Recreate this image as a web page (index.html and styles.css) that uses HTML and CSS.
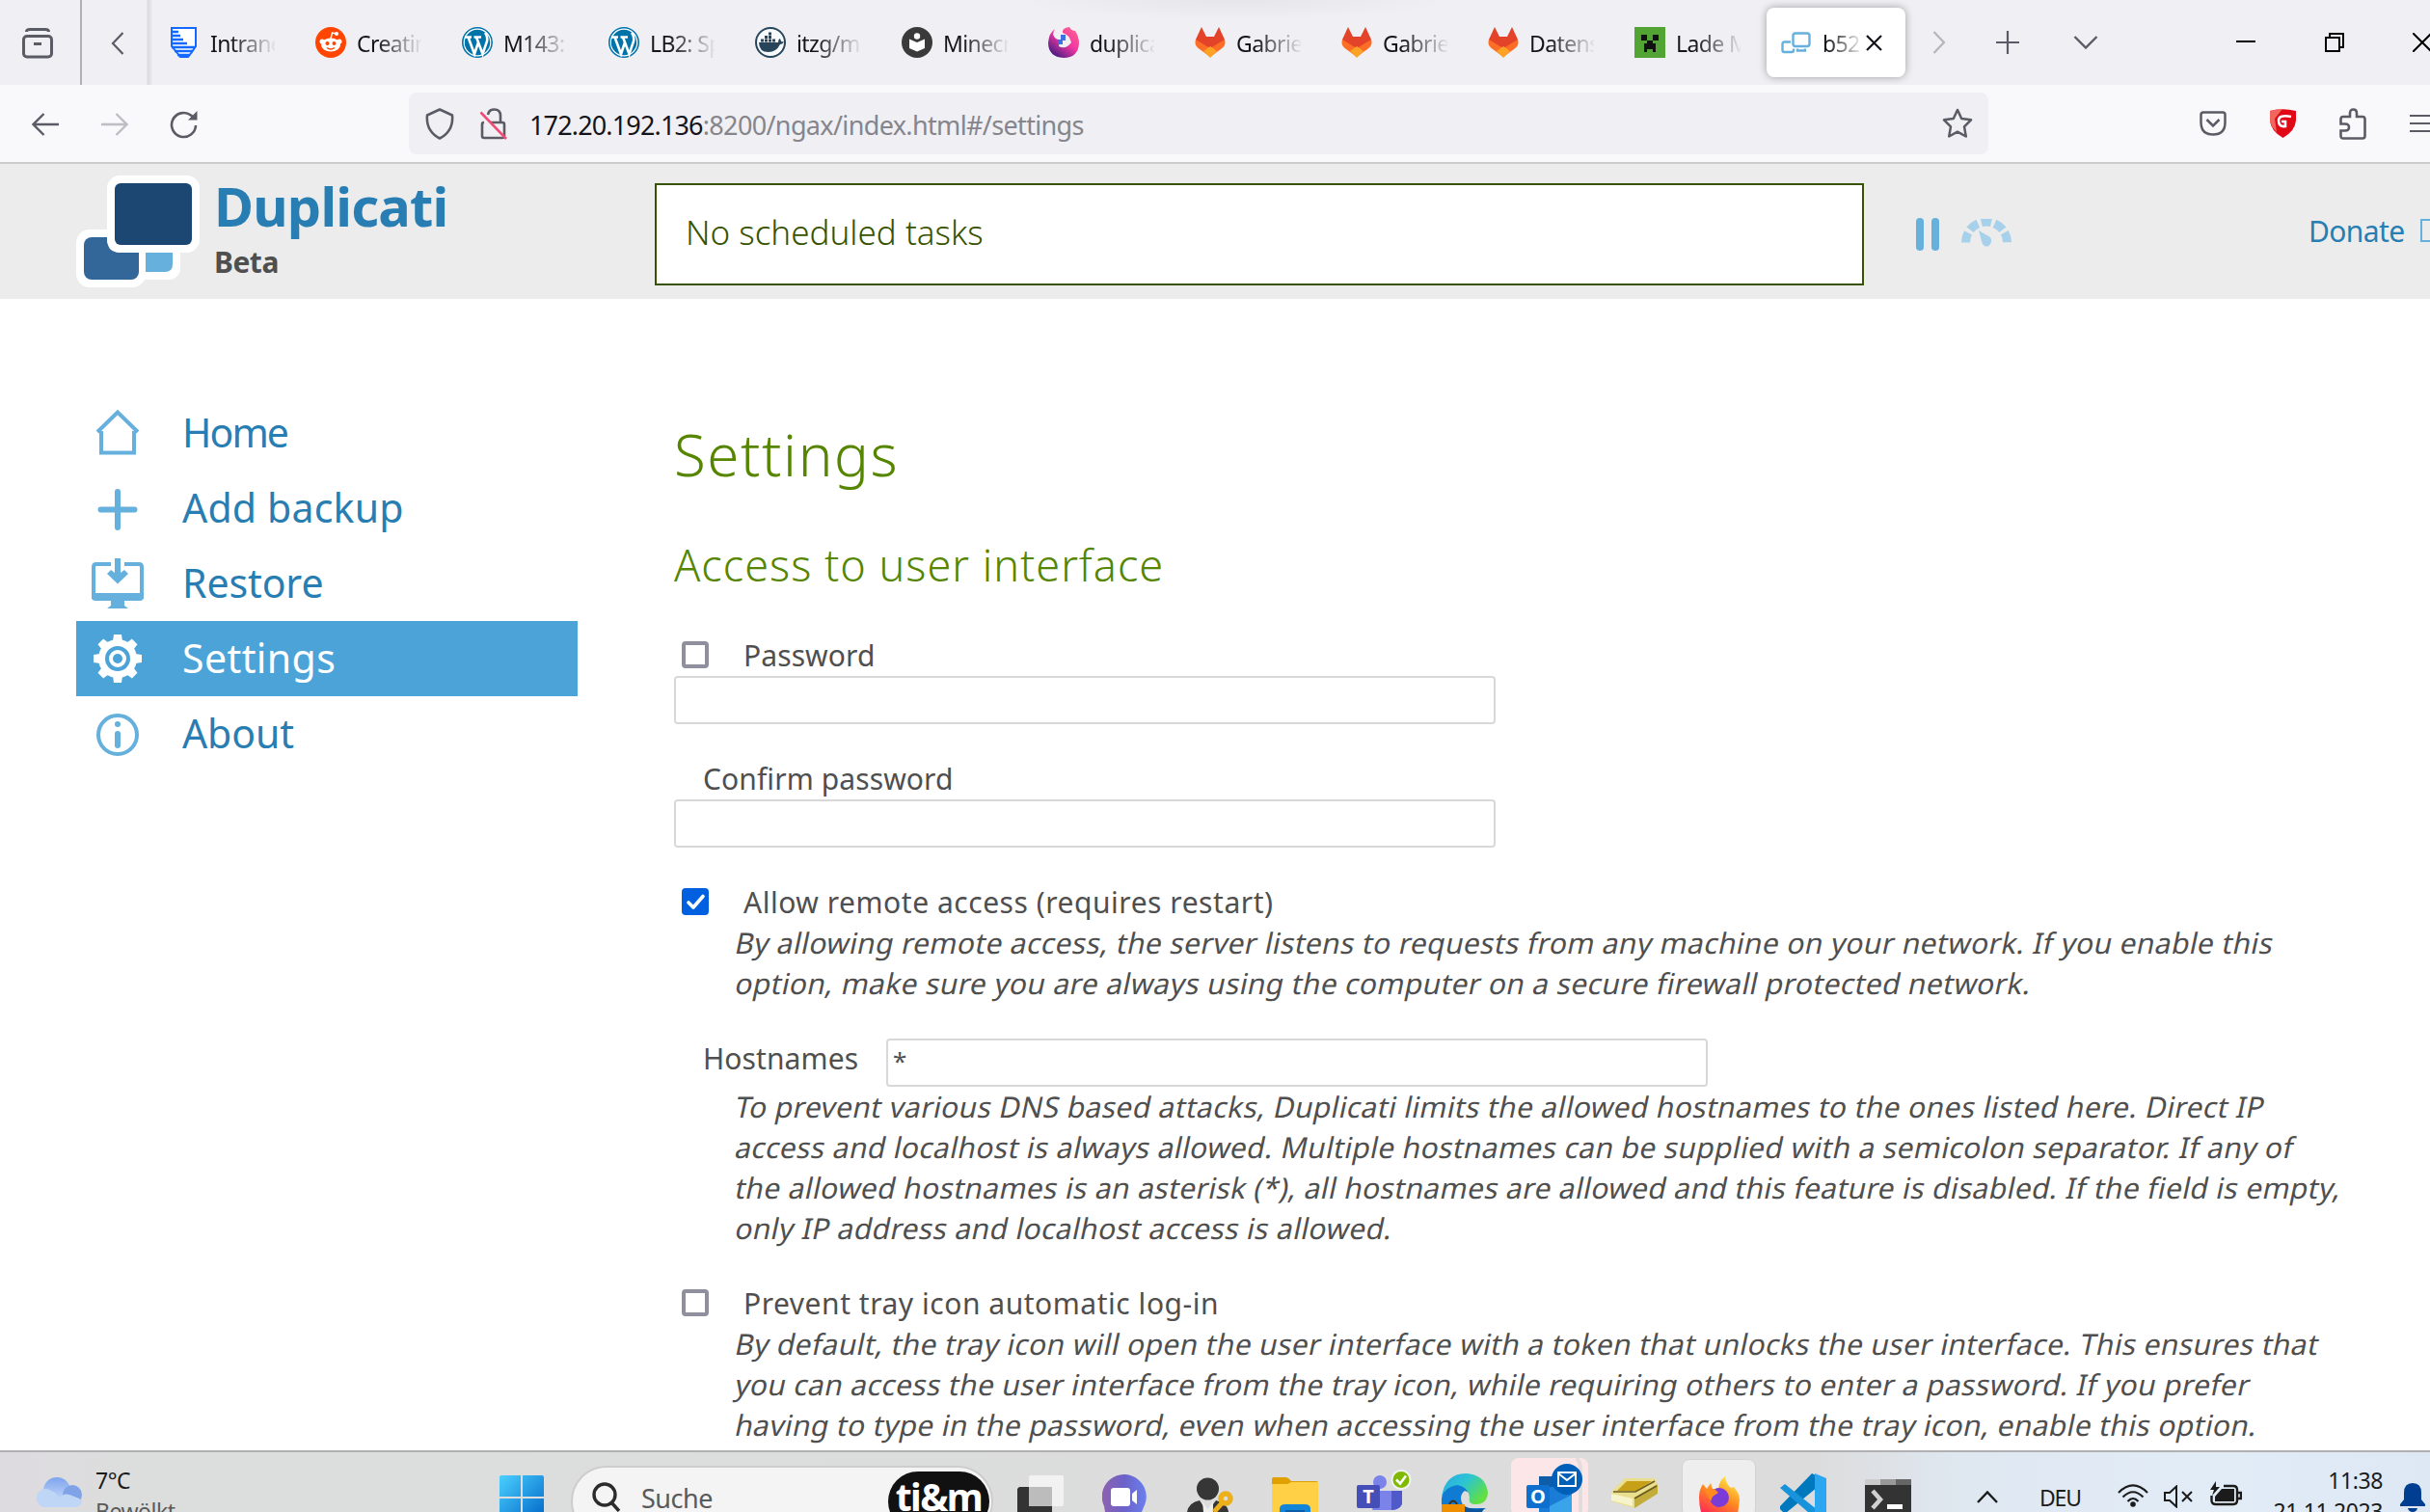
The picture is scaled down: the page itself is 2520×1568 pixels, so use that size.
FILE: index.html
```html
<!DOCTYPE html>
<html lang="de">
<head>
<meta charset="utf-8">
<title>Duplicati</title>
<link rel="stylesheet" href="styles.css">
</head>
<body>
<svg class="defs" width="0" height="0">
  <defs>
    <symbol id="fox" viewBox="0 0 32 32">
      <path fill="#e24329" d="M7 0 12 10H20L25 0 31 13 31 18 16 31 1 18 1 13Z"/>
      <path fill="#fc6d26" d="M1 13Q-1 19 5 23L16 31 27 23Q33 19 31 13L16 22Z"/>
      <path fill="#fca326" d="M9 25 16 20 23 25 16 32Z"/>
    </symbol>
    <symbol id="wp" viewBox="0 0 32 32">
      <circle cx="16" cy="16" r="15.2" fill="#fff" stroke="#0073aa" stroke-width="1.6"/>
      <circle cx="16" cy="16" r="13.2" fill="#0073aa"/>
      <path d="M3 10.5H10M12.500 10.5H20M6.500 10.5 13 28 17 16M15 10.5 21.500 28 26 15Q27 10 24 6" fill="none" stroke="#fff" stroke-width="2.6"/>
    </symbol>
  </defs>
</svg>

<header class="tabbar">
  <div class="archive">
    <svg width="32" height="32" viewBox="0 0 32 32" fill="none" stroke="#5b5b66" stroke-width="3"><path d="M4.500 4Q4.500 1.500 8 1.500H24Q27.500 1.500 27.500 4"/><rect x="1.500" y="8.500" width="29" height="21.500" rx="3.500"/><path d="M12 16.500H20"/></svg>
  </div>
  <div class="scroll-left">
    <svg width="14" height="24" viewBox="0 0 14 24" fill="none" stroke="#5b5b66" stroke-width="2.200"><path d="M12.500 1 2 12 12.500 23"/></svg>
  </div>
  <nav class="tabs">
    <div class="tab"><svg width="32" height="32" viewBox="0 0 32 32"><path d="M3 1H28V20L24 26 20 31H12L8 26 3 20Z" fill="#fff" stroke="#1369ff" stroke-width="2"/><path d="M3 5H10M3 9H12M3 13H15M3 17H19M3 21H27M6 25H25M9 29H22" stroke="#1369ff" stroke-width="2.400"/></svg><span>Intranet</span></div>
    <div class="tab"><svg width="32" height="32" viewBox="0 0 32 32"><circle cx="16" cy="16" r="16" fill="#ff4500"/><g fill="#fff"><ellipse cx="16" cy="18.500" rx="10" ry="7"/><circle cx="7" cy="15" r="2.500"/><circle cx="25" cy="15" r="2.500"/><circle cx="22" cy="7" r="2"/></g><path d="M16 12 17.500 6 22 7" stroke="#fff" stroke-width="1.400" fill="none"/><circle cx="12.500" cy="17" r="2" fill="#ff4500"/><circle cx="19.500" cy="17" r="2" fill="#ff4500"/><path d="M12 21.500Q16 24.500 20 21.500" stroke="#ff4500" stroke-width="1.400" fill="none"/></svg><span>Creating</span></div>
    <div class="tab"><svg width="32" height="32"><use href="#wp"/></svg><span>M143: L</span></div>
    <div class="tab"><svg width="32" height="32"><use href="#wp"/></svg><span>LB2: Sp</span></div>
    <div class="tab"><svg width="32" height="32" viewBox="0 0 32 32"><circle cx="16" cy="16" r="15" fill="#f7fafc" stroke="#27445a" stroke-width="2"/><path fill="#27445a" d="M4 16H24Q24 13 25.500 12 27 13 27 15L30 15.500Q28 18 26 18 22 26 14 26 4 26 4 16ZM6 12.500H9V15.500H6ZM10 12.500H13V15.500H10ZM14 12.500H17V15.500H14ZM18 12.500H21V15.500H18ZM10 9H13V12H10ZM14 9H17V12H14ZM14 5.500H17V8.500H14Z"/></svg><span>itzg/mi</span></div>
    <div class="tab"><svg width="32" height="32" viewBox="0 0 32 32"><circle cx="16" cy="16" r="16" fill="#3a3a3a"/><circle cx="16" cy="9.500" r="3.200" fill="#fff"/><path fill="#fff" d="M8 12.500 16 16 24 12.500V22L16 25.500 8 22Z"/></svg><span>Minecra</span></div>
    <div class="tab"><svg width="32" height="32" viewBox="0 0 32 32"><defs><linearGradient id="md" x1="1" y1="0" x2=".2" y2="1"><stop offset="0" stop-color="#ff6a8b"/><stop offset=".5" stop-color="#f437a2"/><stop offset="1" stop-color="#3b1a80"/></linearGradient></defs><path fill="url(#md)" d="M7 2Q3 8 8 12L12 14 11 20Q18 24 24 16 22 8 15 6 14 1 22 0 24 4 28 4 32 10 32 17 31 32 16 32 0 31 0 16 1 6 7 2Z"/><path fill="#3f6fe0" d="M13 8H18V14H15V18H10V13H13Z"/></svg><span>duplicati</span></div>
    <div class="tab"><svg width="32" height="32"><use href="#fox"/></svg><span>Gabriel</span></div>
    <div class="tab"><svg width="32" height="32"><use href="#fox"/></svg><span>Gabriel</span></div>
    <div class="tab"><svg width="32" height="32"><use href="#fox"/></svg><span>Datensi</span></div>
    <div class="tab"><svg width="32" height="32" viewBox="0 0 32 32"><path fill="#52a535" d="M0 0H32V32H0Z"/><path fill="#111" d="M7 8H13V14H7ZM19 8H25V14H19ZM13 14H19V17H22V26H19V23H13V26H10V17H13Z"/></svg><span>Lade Mi</span></div>
    <div class="tab active"><svg width="32" height="32" viewBox="0 0 32 32" fill="none" stroke="#65b0dd" stroke-width="2.400"><rect x="12.500" y="6.500" width="17" height="13.500" rx="2.500"/><path d="M10 15.500H3.500Q1.500 15.500 1.500 17.500V24Q1.500 26 3.500 26H11Q13 26 13 24V22.500"/><path d="M17 22.500V24.500H25V22.500" /></svg><span>b52</span><svg class="close" width="17" height="17" viewBox="0 0 17 17" stroke="#15141a" stroke-width="2.200"><path d="M1 1 16 16M16 1 1 16"/></svg></div>
  </nav>
  <div class="tabtools">
    <svg class="t-right" width="14" height="24" viewBox="0 0 14 24" fill="none" stroke="#b4b4bb" stroke-width="2.200"><path d="M1.500 1 12 12 1.500 23"/></svg>
    <svg class="t-plus" width="24" height="24" viewBox="0 0 24 24" stroke="#5b5b66" stroke-width="2.200"><path d="M0 12H24M12 0V24"/></svg>
    <svg class="t-down" width="26" height="14" viewBox="0 0 26 14" fill="none" stroke="#5b5b66" stroke-width="2.400"><path d="M1.500 1 13 12.500 24.500 1"/></svg>
    <svg class="t-min" width="20" height="20" viewBox="0 0 20 20" stroke="#000" stroke-width="2"><path d="M0 9H20"/></svg>
    <svg class="t-restore" width="20" height="20" viewBox="0 0 20 20" fill="none" stroke="#000" stroke-width="2"><path d="M1 5H15V19H1ZM5 4V1H19V15H16"/></svg>
    <svg class="t-close" width="20" height="20" viewBox="0 0 20 20" stroke="#000" stroke-width="2"><path d="M0 0 20 20M20 0 0 20"/></svg>
  </div>
</header>

<div class="toolbar">
  <svg class="n-back" width="28" height="24" viewBox="0 0 28 24" fill="none" stroke="#5b5b66" stroke-width="2.400"><path d="M28 12H2M12.500 1 1.500 12 12.500 23"/></svg>
  <svg class="n-fwd" width="28" height="24" viewBox="0 0 28 24" fill="none" stroke="#bdbdc3" stroke-width="2.400"><path d="M0 12H26M15.500 1 26.500 12 15.500 23"/></svg>
  <svg class="n-reload" width="30" height="30" viewBox="0 0 30 30" fill="none" stroke="#5b5b66" stroke-width="2.600"><path d="M27 16A12.500 12.500 0 1 1 22 5.500L26 9"/><path d="M28.500 1V10.500H19Z" fill="#5b5b66" stroke="none"/></svg>
  <div class="urlbar">
    <svg width="30" height="33" viewBox="0 0 30 33" fill="none" stroke="#5b5b66" stroke-width="2.600" stroke-linejoin="round"><path d="M15 1.500 28 7.500Q29.500 24 15 31.500 .5 24 2 7.500Z"/></svg>
    <svg class="lock" width="30" height="33" viewBox="0 0 30 33" fill="none" stroke="#5b5b66" stroke-width="2.600"><path d="M9 7Q10 1.500 15.500 1.500 22 1.500 22 8V14M12 15H24Q26 15 26 17V29Q26 31 24 31H5Q3 31 3 29V17Q3 15 5 15"/><path d="M1.500 4.500 28 32" stroke="#f24a76"/></svg>
    <span class="url"><b>172.20.192.136</b>:8200/ngax/index.html#/settings</span>
    <svg class="star" width="32" height="32" viewBox="0 0 32 32" fill="none" stroke="#5b5b66" stroke-width="2.500" stroke-linejoin="round"><path d="M16 2 20.200 11 30 12.300 23 19.400 24.800 29.500 16 24.700 7.200 29.500 9 19.400 2 12.300 11.800 11Z"/></svg>
  </div>
  <svg class="x-pocket" width="28" height="26" viewBox="0 0 28 26" fill="none" stroke="#5b5b66" stroke-width="2.500"><path d="M4 1.500H24Q26.500 1.500 26.500 4V12Q26.500 24.500 14 24.500 1.500 24.500 1.500 12V4Q1.500 1.500 4 1.500Z"/><path d="M7.500 9 14 15.500 20.500 9"/></svg>
  <svg class="x-g" width="27" height="30" viewBox="0 0 27 30"><path fill="#e10915" d="M0 2Q13-1.500 27 2V12Q26 23 13.500 30 1 23 0 12Z"/><path fill="#f2665f" d="M0 2Q6 0 13 0L5 10 7 24Q1 18 0 12Z"/><path d="M22 8Q9 5.500 9 12 9 19 16 18V13H12" fill="none" stroke="#fff" stroke-width="2.600"/></svg>
  <svg class="x-puzzle" width="28" height="33" viewBox="0 0 28 33" fill="none" stroke="#5b5b66" stroke-width="2.600"><path d="M11 9V5.500Q11 1.500 14.500 1.500 18 1.500 18 5.500V9H24Q26.500 9 26.500 11.500V29Q26.500 31.500 24 31.500H4Q1.500 31.500 1.500 29V23.500H6Q10 23.500 10 20 10 16.500 6 16.500H1.500V11.500Q1.500 9 4 9Z"/></svg>
  <svg class="x-menu" width="28" height="20" viewBox="0 0 28 20" stroke="#5b5b66" stroke-width="2.200"><path d="M0 2H28M0 10H28M0 18H28"/></svg>
</div>

<section class="apphead">
  <svg class="logo" width="128" height="118" viewBox="0 0 128 118"><g fill="#fff"><rect x="32" y="0" width="96" height="80" rx="14"/><rect x="0" y="56" width="72" height="60" rx="14"/><rect x="50" y="60" width="58" height="48" rx="12"/></g><path fill="#65b0dd" d="M72 80H100V92Q100 100 92 100H72Z"/><rect x="8" y="64" width="57" height="44" rx="8" fill="#336699"/><path d="M32 50V66Q32 80 46 80H66" fill="#fff"/><rect x="32" y="0" width="96" height="80" rx="14" fill="#fff"/><rect x="40" y="8" width="80" height="64" rx="6" fill="#1d4773"/></svg>
  <div class="brand"><h1>Duplicati</h1><strong>Beta</strong></div>
  <div class="status">No scheduled tasks</div>
  <svg class="pause" width="24" height="34" viewBox="0 0 24 34" fill="#65b0dd"><rect width="8" height="34" rx="4"/><rect x="16" width="8" height="34" rx="4"/></svg>
  <svg class="gauge" width="52" height="29" viewBox="0 0 52 29"><path d="M4.500 24.500A21.500 21.500 0 0 1 47.500 24.500" fill="none" stroke="#a7d1ea" stroke-width="9" stroke-dasharray="10.500 3.600" /><path fill="#a7d1ea" d="M18 12 30 19Q33 24 28.500 28 24 30 21.500 25Z"/></svg>
  <a class="donate">Donate</a><i class="badge"></i>
</section>

<main class="page">
  <ul class="menu">
    <li class="m-home"><svg width="54" height="54" viewBox="0 0 54 54" fill="none" stroke="#65b0dd" stroke-width="4"><path d="M10 25V47.500H44V25M6 26 27 5.500 48 26"/></svg><span>Home</span></li>
    <li class="m-add"><svg width="54" height="54" viewBox="0 0 54 54" stroke="#65b0dd" stroke-width="6" stroke-linecap="round"><path d="M27 10V47M9.500 28.500H44.500"/></svg><span>Add backup</span></li>
    <li class="m-restore"><svg width="54" height="54" viewBox="0 -1 54 54"><path d="M20 6H5Q2 6 2 9V40H52V9Q52 6 49 6H34" fill="none" stroke="#65b0dd" stroke-width="4"/><path fill="#65b0dd" d="M0 36H54V40Q54 44 50 44H34V49L38 52H16L20 49V44H4Q0 44 0 40ZM24 0H30V15L34 12 38 16 27 26.500 16 16 20 12 24 15Z"/></svg><span>Restore</span></li>
    <li class="current"><svg width="54" height="54" viewBox="0 0 54 54"><g fill="#fff"><circle cx="27" cy="27" r="20"/><path id="tooth" d="M22 9 23 2H31L32 9V45L31 52H23L22 45Z"/><use href="#tooth" transform="rotate(45 27 27)"/><use href="#tooth" transform="rotate(90 27 27)"/><use href="#tooth" transform="rotate(135 27 27)"/></g><circle cx="27" cy="27" r="11" fill="none" stroke="#4ca3d8" stroke-width="4"/><circle cx="27" cy="27" r="5" fill="#4ca3d8"/></svg><span>Settings</span></li>
    <li class="m-about"><svg width="54" height="54" viewBox="0 -1 54 54"><circle cx="27" cy="27" r="20" fill="none" stroke="#65b0dd" stroke-width="4"/><circle cx="27" cy="16" r="3" fill="#65b0dd"/><path d="M27 26V38" stroke="#65b0dd" stroke-width="6" stroke-linecap="round"/></svg><span>About</span></li>
  </ul>
  <div class="content">
    <h2>Settings</h2>
    <h3>Access to user interface</h3>
    <div class="row"><i class="check"></i><label>Password</label></div>
    <div class="field"></div>
    <div class="row plain gap"><label>Confirm password</label></div>
    <div class="field"></div>
    <div class="row gap"><i class="check on"><svg width="28" height="28" viewBox="0 0 28 28" fill="none" stroke="#fff" stroke-width="3.600" stroke-linecap="round" stroke-linejoin="round"><path d="M7 15 12 20 22 8.500"/></svg></i><label class="wide">Allow remote access (requires restart)</label></div>
    <p class="help"><span>By allowing remote access, the server listens to requests from any machine on your network. If you enable this</span><span>option, make sure you are always using the computer on a secure firewall protected network.</span></p>
    <div class="row plain hosts"><label>Hostnames</label><div class="field">*</div></div>
    <p class="help"><span>To prevent various DNS based attacks, Duplicati limits the allowed hostnames to the ones listed here. Direct IP</span><span>access and localhost is always allowed. Multiple hostnames can be supplied with a semicolon separator. If any of</span><span>the allowed hostnames is an asterisk (*), all hostnames are allowed and this feature is disabled. If the field is empty,</span><span>only IP address and localhost access is allowed.</span></p>
    <div class="row last"><i class="check"></i><label class="wide">Prevent tray icon automatic log-in</label></div>
    <p class="help"><span>By default, the tray icon will open the user interface with a token that unlocks the user interface. This ensures that</span><span>you can access the user interface from the tray icon, while requiring others to enter a password. If you prefer</span><span>having to type in the password, even when accessing the user interface from the tray icon, enable this option.</span></p>
  </div>
</main>

<footer class="taskbar">
  <svg class="k-cloud" width="48" height="31" viewBox="0 0 48 31"><defs><linearGradient id="cl" x1="0" y1="0" x2="0" y2="1"><stop offset="0" stop-color="#7ea4ee"/><stop offset="1" stop-color="#cfe0fa"/></linearGradient></defs><circle cx="22" cy="14" r="14" fill="url(#cl)"/><circle cx="38" cy="18" r="10" fill="#7fa3e6"/><path fill="#c0d6f7" d="M9 31A9.500 9.500 0 1 1 16 14Q22 16 24 22 30 14 40 20 48 22 48 26 46 31 40 31Z"/></svg>
  <div class="weather"><span>7°C</span><small>Bewölkt</small></div>
  <svg class="k-win" width="46" height="48" viewBox="0 0 46 48"><defs><linearGradient id="wn" x1="0" y1="0" x2="1" y2="1"><stop offset="0" stop-color="#4bd0ff"/><stop offset="1" stop-color="#0067c8"/></linearGradient></defs><path fill="url(#wn)" d="M2 0H22V22H0V2Q0 0 2 0ZM24 0H44Q46 0 46 2V22H24ZM0 24H22V46H0ZM24 24H46V46H24Z"/></svg>
  <div class="search"><svg width="30" height="32" viewBox="0 0 30 32" fill="none" stroke="#2b2b2b" stroke-width="3.400"><circle cx="13" cy="13" r="11"/><path d="M20 21 28 30"/></svg><span>Suche</span><b class="tim">ti&amp;m</b></div>
  <svg class="k-view" width="48" height="38" viewBox="0 0 48 38"><path fill="#333" d="M2 12H36V38H0V14Z"/><rect x="12" width="36" height="32" rx="2" fill="#f2f2f2"/><path fill="#bcbcbc" d="M12 12H36V32H12Z"/></svg>
  <svg class="k-chat" width="46" height="39" viewBox="0 0 46 39"><defs><linearGradient id="ch" x1="0" y1="0" x2="1" y2="0"><stop offset="0" stop-color="#8f61b0"/><stop offset=".5" stop-color="#6b62c9"/><stop offset="1" stop-color="#6b80ee"/></linearGradient></defs><path fill="url(#ch)" d="M3 39 2 33A23 23 0 1 1 43 34L41 39Z"/><rect x="9" y="14" width="20" height="19" rx="3" fill="#fff"/><path fill="#fff" d="M31 20 36 16V31L31 27Z"/></svg>
  <svg class="k-key" width="50" height="36" viewBox="0 0 50 36"><circle cx="21.500" cy="12" r="11.500" fill="#363636"/><path fill="#363636" d="M0 36Q2 26 13 24L21 36 30 24Q42 27 43 36Z"/><path d="M16 25 21.500 33 27 25V36H17Z" fill="#eee"/><path d="M28 36 36 27" stroke="#ebb01b" stroke-width="5"/><circle cx="40" cy="22" r="5" fill="#ddd" stroke="#ebb01b" stroke-width="5.500"/></svg>
  <svg class="k-folder" width="48" height="36" viewBox="0 0 48 36"><path fill="#e0a000" d="M0 2Q0 0 2 0H14Q17 0 20 4H46Q48 4 48 6V12H0Z"/><path fill="#ffcf45" d="M0 7H16L20 5H48V36H0Z"/><path fill="#1186d8" d="M8 36V33Q8 28 14 28H34Q40 28 40 33V36Z"/><path fill="#0b5cab" d="M14 34H34V36H14Z"/></svg>
  <svg class="k-teams" width="58" height="42" viewBox="0 0 58 42"><circle cx="24" cy="13" r="7" fill="#7b83eb"/><path fill="#7b83eb" d="M22 22H38V42H16Z"/><path fill="#5059c9" d="M36 22H47V36Q44 42 36 42Z"/><rect y="16" width="24" height="24" rx="2" fill="#454fb8"/><circle cx="46" cy="10.500" r="9.500" fill="#7fba00" stroke="#f2f2f2" stroke-width="2"/><path d="M41 10.500 45 14.500 51 6.500" stroke="#fff" stroke-width="2.600" fill="none"/><text x="12" y="35" text-anchor="middle" class="glyph">T</text></svg>
  <svg class="k-edge" width="48" height="40" viewBox="0 0 48 40"><defs><linearGradient id="eg" x1="0" y1="0" x2="1" y2=".6"><stop offset="0" stop-color="#2aa8e8"/><stop offset=".5" stop-color="#2cc5d2"/><stop offset="1" stop-color="#62e03f"/></linearGradient></defs><path fill="#0f7bd2" d="M0 26Q2 10 18 10 34 10 33 22L24 18Q16 24 24 36L46 36 40 40H0Z"/><path fill="url(#eg)" d="M0 24Q4 0 25 0 46 1 48 20 47 32 36 32 27 32 29 25 28 14 16 12 4 14 0 24Z"/><path fill="#0d559b" d="M24 34Q33 39 44 36L42 40H24Z"/><path d="M8 32Q12 25 16 32" stroke="#3b3020" stroke-width="2" fill="none"/><path fill="#f08f00" d="M0 32H24V40H0Z"/></svg>
  <div class="tile pink"><svg width="80" height="56" viewBox="0 0 80 56"><path d="M68 0Q72 4 72 12V56" stroke="#e2dcdd" stroke-width="4" fill="none"/><path fill="#0f5ca8" d="M29 19H55V32H29Z"/><path fill="#1a7cd6" d="M29 30H63V56H29Z"/><path fill="#3aa4ea" d="M40 50 63 38V56H40Z"/><rect x="16" y="28" width="24" height="24" rx="2" fill="#0f6fce"/><circle cx="58" cy="22" r="16" fill="#005fb8"/><path d="M49 15H67V29H49ZM49 16 58 23 67 16" fill="none" stroke="#fff" stroke-width="2"/><text x="28" y="47" text-anchor="middle" class="glyph">O</text></svg></div>
  <svg class="k-disk" width="48" height="32" viewBox="0 0 48 32"><path fill="#e9df8e" d="M0 14 14 0H46L48 14 24 31 0 24Z"/><path fill="#c3ad3a" d="M24 20 48 6V16L24 31Z"/><path fill="#f7f3cc" d="M0 16 22 21V29L0 23Z"/><path fill="#c8a018" d="M16 3H42L26 13H6Z"/><path d="M2 14H25L45 3M24 21 47 8" fill="none" stroke="#6b5c22" stroke-width="1.600"/></svg>
  <div class="tile lit"><svg width="42" height="40" viewBox="0 0 42 40"><defs><linearGradient id="fx" x1=".8" y1="0" x2=".2" y2="1"><stop offset="0" stop-color="#fff14a"/><stop offset=".5" stop-color="#ff8a1f"/><stop offset="1" stop-color="#ff2a55"/></linearGradient></defs><path fill="url(#fx)" d="M4 8 8 13 12 7 14 13 20 13Q21 4 27 0 28 8 33 12L36 11Q42 18 42 24L40 40H3Q0 32 0 22 0 14 4 8Z"/><circle cx="21" cy="22" r="10" fill="#7b3bd8"/><path fill="#ff8a1f" d="M6 14 16 13 20 17 14 21 12 26Z"/></svg></div>
  <svg class="k-code" width="48" height="41" viewBox="0 0 48 41"><path fill="#0078be" d="M0 34 33 0 39 3V14L6 41H4L0 37Z"/><path fill="#1793dc" d="M0 15 5 11 39 38V41H30Z"/><path fill="#2ba7f2" d="M36 0 48 5V41H36Z"/></svg>
  <svg class="k-term" width="48" height="34" viewBox="0 0 48 34"><path fill="#333" d="M0 0H48V34H0Z"/><path fill="#ccc" d="M0 0H16V6H0Z"/><path fill="#999" d="M16 0H32V6H16Z"/><path fill="#666" d="M32 0H48V6H32Z"/><path d="M8 12 16 21 8 30" stroke="#d0d0d0" stroke-width="4.500" fill="none"/><path d="M23 28.500H39" stroke="#fff" stroke-width="5"/></svg>
  <svg class="k-up" width="22" height="13" viewBox="0 0 22 13" fill="none" stroke="#1b1b1b" stroke-width="2.400"><path d="M1 12 11 1.500 21 12"/></svg>
  <span class="lang">DEU</span>
  <svg class="k-wifi" width="32" height="24" viewBox="0 0 32 24" fill="none" stroke="#1b1b1b" stroke-width="2.200"><path d="M1 9Q16-6 31 9M5.500 13.500Q16 3 26.500 13.500M10.500 18Q16 12 21.500 18"/><circle cx="16" cy="21" r="2.800" fill="#1b1b1b" stroke="none"/></svg>
  <svg class="k-mute" width="30" height="24" viewBox="0 0 30 24" fill="none" stroke="#1b1b1b" stroke-width="2"><path d="M1 8H6L13 1.500V22.500L6 16H1ZM19 7 29 17M29 7 19 17"/></svg>
  <svg class="k-batt" width="33" height="26" viewBox="0 0 33 26"><path d="M14 5H24Q28 5 28 9V20Q28 24 24 24H6Q1.500 24 1.500 20V15M28 12H32V18H28" fill="none" stroke="#1b1b1b" stroke-width="2.400"/><path fill="#1b1b1b" d="M12 8H25V21H5V16ZM6 0 0 9H4L2 15 10 6H6Z"/></svg>
  <div class="clock"><span>11:38</span><span>21.11.2023</span></div>
  <svg class="k-bell" width="26" height="30" viewBox="0 0 26 30" fill="#003e92"><path d="M13 0Q22 0 22 10V17L26 22V24H0V22L4 17V10Q4 0 13 0ZM8 26H18Q17 30 13 30 9 30 8 26Z"/></svg>
</footer>
</body>
</html>
```
FILE: styles.css
```css
* { box-sizing: border-box; }
body {
  margin: 0;
  width: 2520px;
  height: 1568px;
  overflow: hidden;
  display: flex;
  flex-direction: column;
  background: #fff;
  font-family: "Noto Sans", "Open Sans", sans-serif;
}
svg { flex: none; display: block; }
.defs { position: absolute; }
h1, h2, h3, p, ul { margin: 0; padding: 0; }

/* Tab strip */
.tabbar {
  height: 88px;
  flex: none;
  display: flex;
  align-items: center;
  background: radial-gradient(ellipse 230px 20px at 1280px 0, #e6e6ea, #f0f0f4);
  overflow: hidden;
}
.archive {
  width: 85px;
  height: 88px;
  flex: none;
  padding: 29px 0 0 23px;
  border-right: 2px solid #b1b1b8;
}
.scroll-left {
  width: 75px;
  height: 88px;
  flex: none;
  padding: 33px 0 0 30px;
  background: linear-gradient(90deg, transparent 67px, #d9d9de 68px, #f0f0f4 74px);
}
.tabs { display: flex; gap: 8px; padding-left: 0; }
.tab {
  width: 144px;
  height: 72px;
  flex: none;
  display: flex;
  align-items: center;
  padding-left: 15px;
  gap: 11px;
  border-radius: 8px;
}
.tab span {
  width: 67px;
  overflow: hidden;
  white-space: nowrap;
  font-size: 23px;
  line-height: 40px;
  padding-top: 2px;
  letter-spacing: -0.6px;
  color: #15141a;
  -webkit-mask-image: linear-gradient(90deg, #000 20px, transparent 69px);
  mask-image: linear-gradient(90deg, #000 20px, transparent 69px);
}
.tab.active { background: #fff; box-shadow: 0 0 8px rgba(0, 0, 0, .35); }
.tab.active span { width: 40px; -webkit-mask-image: linear-gradient(90deg, #000 5px, transparent 42px); mask-image: linear-gradient(90deg, #000 5px, transparent 42px); }
.tab .close { margin-left: -6px; }
.tabtools { display: flex; align-items: center; flex: none; padding-left: 28px; }
.t-plus { margin-left: 52px; }
.t-down { margin-left: 56px; }
.t-min { margin-left: 143px; }
.t-restore { margin-left: 72px; }
.t-close { margin-left: 71px; }

/* Navigation toolbar */
.toolbar {
  height: 82px;
  flex: none;
  display: flex;
  align-items: center;
  background: #f9f9fb;
  border-bottom: 2px solid #ccc;
  overflow: hidden;
}
.n-back { margin-left: 33px; margin-top: 2px; }
.n-fwd { margin-left: 44px; margin-top: 2px; }
.n-reload { margin-left: 43px; margin-top: 2px; }
.urlbar {
  margin-left: 218px;
  width: 1638px;
  height: 64px;
  flex: none;
  display: flex;
  align-items: center;
  padding: 0 16px 0 17px;
  border-radius: 8px;
  background: #f0f0f4;
}
.lock { margin-left: 26px; }
.url { margin-left: 22px; padding-top: 4px; font-size: 27px; line-height: 48px; letter-spacing: -0.65px; color: #85858b; }
.url b { font-weight: 400; color: #15141a; letter-spacing: -0.85px; }
.star { margin-left: auto; }
.x-pocket { margin-left: 219px; }
.x-g { margin-left: 45px; }
.x-puzzle { margin-left: 45px; }
.x-menu { margin-left: 45px; }

/* Application header */
.apphead {
  height: 140px;
  flex: none;
  display: flex;
  align-items: flex-start;
  background: #ececec;
  overflow: hidden;
}
.logo { margin: 12px 0 0 79px; }
.brand { width: 454px; flex: none; padding-left: 15px; margin-top: 13px; }
.brand h1 { font-size: 56px; line-height: 60px; letter-spacing: -0.8px; color: #287eb2; }
.brand strong { display: block; font-size: 30px; line-height: 58px; letter-spacing: -0.5px; color: #4f4f4f; }
.status {
  width: 1254px;
  height: 106px;
  flex: none;
  margin-top: 20px;
  margin-left: 18px;
  padding-left: 30px;
  border: 2px solid #385300;
  background: #fff;
  font-size: 35px;
  font-weight: 300;
  line-height: 97px;
  letter-spacing: 0;
  color: #385300;
}
.pause { margin: 56px 0 0 54px; }
.gauge { margin: 57px 0 0 23px; }
.donate { margin: 42px 0 0 308px; width: 104px; flex: none; font-size: 30px; line-height: 56px; letter-spacing: -0.6px; color: #287eb2; }
.badge { flex: none; margin: 57px 0 0 12px; width: 24px; height: 24px; border: 2px solid #65b0dd; }

/* Page body */
.page { flex: none; height: 1194px; display: flex; overflow: hidden; }
.menu {
  width: 520px;
  flex: none;
  list-style: none;
  margin-left: 79px;
  padding-top: 100px;
}
.menu li {
  height: 78px;
  display: flex;
  align-items: center;
  padding-left: 16px;
  gap: 40px;
  font-size: 41px;
  line-height: 74px;
  letter-spacing: 0.2px;
  color: #287eb2;
}
.menu span { margin-top: -2px; }
.menu .m-home { letter-spacing: -1.9px; }
.menu .m-restore, .menu .m-about { letter-spacing: -0.1px; }
.menu .current { background: #4ca3d8; color: #fff; letter-spacing: 0.4px; }
.content { flex: none; width: 1800px; margin-left: 100px; padding-top: 121px; color: #4f4f4f; font-size: 30px; line-height: 42px; white-space: nowrap; }
.content h2 { font-size: 60px; line-height: 80px; font-weight: 300; letter-spacing: 1.6px; color: #568600; }
.content h3 { margin-top: 45px; font-size: 45px; line-height: 60px; font-weight: 300; letter-spacing: 1px; color: #568600; }
.row { display: flex; height: 42px; }
.content h3 + .row { margin-top: 43px; }
.check { flex: none; width: 28px; height: 28px; margin: 6px 36px 0 8px; border: 4px solid #8f8f9d; border-radius: 4px; background: #fff; }
.check.on { border: 0; background: #0060df; }
.row label { display: block; letter-spacing: .1px; }
.row label.wide { letter-spacing: .53px; }
.plain { padding-left: 30px; }
.gap { margin-top: 36px; }
.field { width: 852px; height: 50px; border: 2px solid #d8d8d8; border-radius: 4px; background: #fff; }
.hosts { margin-top: 36px; height: 50px; }
.hosts label { width: 190px; margin-top: 0; }
.hosts .field { padding-left: 5px; font-size: 26px; line-height: 42px; }
.last { margin-top: 36px; }
/* slanted upright letters, one box per line so that each leans about its own centre */
.help { margin-left: 64px; letter-spacing: .35px; }
.help span { display: block; width: 1700px; transform: skewX(-12deg); }

/* Windows taskbar */
.taskbar {
  height: 64px;
  flex: none;
  display: flex;
  align-items: flex-start;
  border-top: 2px solid #b0b0b2;
  background: linear-gradient(90deg, #dedbe0 0, #dcdddd 130px, #dcdcdc 1880px, #dfe8f1 2040px, #e2ecf7 2300px, #dde8f4 100%);
  overflow: hidden;
  color: #1b1b1b;
  font-size: 23px;
}
.k-cloud { margin: 26px 0 0 37px; }
.weather { width: 433px; flex: none; padding: 13px 0 0 14px; letter-spacing: -0.5px; }
.weather span, .weather small, .clock span { display: block; font-size: 23px; line-height: 32px; }
.weather small { color: #5a5a5a; }
.k-win { margin-top: 24px; }
.search {
  width: 438px;
  height: 74px;
  flex: none;
  margin: 14px 0 0 28px;
  padding: 17px 0 0 20px;
  display: flex;
  border: 2px solid #cdcdcd;
  border-radius: 37px;
  background: #f4f4f4;
}
.search svg { margin-top: -2px; }
.search span { margin-left: 21px; font-size: 27px; line-height: 30px; letter-spacing: -0.5px; color: #5a5a5a; }
.tim {
  margin: -13px 2px 0 auto;
  width: 105px;
  height: 62px;
  border-radius: 31px;
  background: #111;
  color: #fff;
  font-size: 39px;
  line-height: 52px;
  letter-spacing: -1.6px;
  text-align: center;
}
.k-view { margin: 24px 0 0 25px; }
.k-chat { margin: 23px 0 0 40px; }
.k-key { margin: 26px 0 0 42px; }
.k-folder { margin: 26px 0 0 38px; }
.k-teams { margin: 18px 0 0 40px; }
.k-edge { margin: 22px 0 0 30px; }
.glyph { font: 700 20px "Noto Sans", sans-serif; fill: #fff; }
.tile { flex: none; height: 60px; border-radius: 8px; overflow: hidden; }
.pink { width: 80px; margin: 6px 0 0 24px; background: #fde6e8; }
.k-disk { margin: 27px 0 0 24px; }
.lit { width: 77px; margin: 7px 0 0 25px; padding: 17px 0 0 17px; background: #eee; border: 1px solid #d3d3d3; }
.k-code { margin: 22px 0 0 25px; }
.k-term { margin: 28px 0 0 40px; }
.k-up { margin: 40px 0 0 68px; }
.lang { margin: 29px 0 0 43px; width: 81px; line-height: 36px; letter-spacing: -1.2px; }
.k-wifi { margin: 33px 0 0 0; }
.k-mute { margin: 34px 0 0 16px; }
.k-batt { margin: 30px 0 0 18px; }
.clock { width: 146px; flex: none; padding-top: 13px; text-align: right; letter-spacing: -0.4px; }
.k-bell { margin: 32px 0 0 18px; }
```
